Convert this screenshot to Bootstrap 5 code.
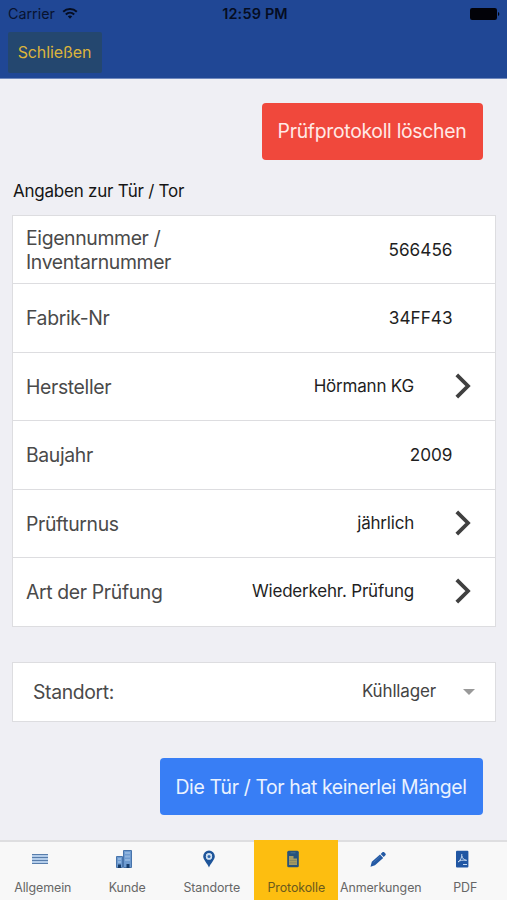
<!DOCTYPE html>
<html lang="de">
<head>
<meta charset="utf-8">
<meta name="viewport" content="width=device-width, initial-scale=1">
<title>Protokolle</title>
<link href="https://cdn.jsdelivr.net/npm/bootstrap@5.3.0/dist/css/bootstrap.min.css" rel="stylesheet">
<style>
  body { font-family: Inter, "Liberation Sans", sans-serif; background: #efeff4; height: 900px; overflow: hidden; }
  svg { display: block; flex: none; }
  .app-header { background: #204795; height: 79px; border-bottom: 1px solid #6f88bd; }
  .status-bar { grid-template-columns: 1fr auto 1fr; height: 28px; font-size: 14.3px; line-height: 28px; color: #081330; }
  .status-time { color: #050d22; font-size: 14.4px; letter-spacing: .2px; padding-left: 3px; }
  .wifi { margin-left: 6px; }
  .battery { padding-right: 7px; }
  .btn-close-view { width: 94px; height: 41px; margin: 4px 0 0 8px; padding: 0 1px 1px 0; background: #24476f; color: #dcb43c; border-radius: 2px; font-size: 16px; letter-spacing: -.1px; line-height: 1; }
  .btn-action { height: 57px; border-radius: 4px; font-size: 19.4px; line-height: 1; padding: 2px 0 0; }
  .btn-delete { width: 221px; background: #f0483c; color: #ffe9e6; margin-top: 23.5px; letter-spacing: -.3px; }
  .btn-ok { width: 323px; background: #387ef5; color: #eaf2ff; margin-top: 36px; letter-spacing: -.37px; }
  .action-row { padding-right: 24.5px; }
  .section-title { font-size: 17px; letter-spacing: -.23px; line-height: 20px; margin: 21.500px 0 14px 13px; color: #151515; }
  .panel { margin: 0 11px 0 12px; border: 1px solid #dddde0; background: #fff; }
  .field-list { height: 411.500px; }
  .field-row { flex: 1 1 0; padding-left: 13px; color: #4a4a4a; }
  .field-row + .field-row { border-top: 1.4px solid #dddde0; }
  .field-name { font-size: 19.4px; letter-spacing: -.36px; line-height: 24.5px; padding-top: 1px; }
  .field-value { font-size: 17px; letter-spacing: -.2px; color: #1f1f1f; }
  .field-number { font-size: 17.2px; letter-spacing: 0; }
  .inset-plain { padding-right: 42.5px; }
  .inset-arrow { padding-right: 24px; }
  .chevron { width: 16px; height: 28px; margin: -1px 0 0 41px; }
  .location { height: 60px; margin-top: 35.500px; padding: 0 19px 0 20px; color: #4a4a4a; }
  .location-value { font-size: 17px; letter-spacing: -.15px; color: #444; margin: 0 26px 0 0; }
  .location-arrow { margin-top: -1px; }
  .tab-bar { height: 60px; border-top: 2px solid #dedee0; background: #f8f8f8; }
  .tab-item { flex: 1 1 0; min-width: 0; font-size: 12.4px; letter-spacing: -.07px; color: #666; line-height: 16px; white-space: nowrap; padding-left: 1px; }
  .tab-item svg { width: 20px; height: 20px; margin: 7px 6px 11px 0; }
  .tab-active { background: #fdbe10; margin-top: -2px; padding-top: 2px; color: #6a591d; }
</style>
</head>
<body class="d-flex flex-column">
<header class="app-header">
  <div class="status-bar d-grid">
    <div class="d-flex align-items-center ps-2">
      <span>Carrier</span>
      <svg class="wifi" width="18" height="14" viewBox="0 0 18 14" fill="none" stroke="#050d22" stroke-width="2"><path d="M2.2 4.700C6 1 12 1 15.8 4.700M4.8 7.500c2.4-2.3 6-2.3 8.4 0"/><path d="M6.8 9.300c1.3-1.2 3.1-1.2 4.4 0L9 11.700z" fill="#050d22" stroke="none"/></svg>
    </div>
    <strong class="status-time fw-semibold">12:59 PM</strong>
    <div class="battery d-flex justify-content-end align-items-center">
      <svg width="30" height="12" viewBox="0 0 30 12" fill="#020208"><rect width="27" height="12" rx="2.2"/><path d="M28 4c1.8.6 1.8 3.400 0 4z"/></svg>
    </div>
  </div>
  <button class="btn btn-close-view border-0">Schließen</button>
</header>

<main class="d-flex flex-column flex-grow-1">
  <div class="action-row d-flex justify-content-end"><button class="btn btn-action btn-delete border-0">Prüfprotokoll löschen</button></div>
  <h1 class="section-title fw-normal">Angaben zur Tür / Tor</h1>
  <section class="panel field-list d-flex flex-column">
    <div class="field-row inset-plain d-flex align-items-center justify-content-between"><span class="field-name">Eigennummer /<br>Inventarnummer</span><span class="field-value field-number">566456</span></div>
    <div class="field-row inset-plain d-flex align-items-center justify-content-between"><span class="field-name">Fabrik-Nr</span><span class="field-value field-number">34FF43</span></div>
    <div class="field-row inset-arrow d-flex align-items-center"><span class="field-name me-auto">Hersteller</span><span class="field-value">Hörmann KG</span><svg class="chevron" viewBox="0 0 16 28" fill="none" stroke="#404040" stroke-width="3.800"><path d="M1.800 2.800 13 14 1.800 25.200"/></svg></div>
    <div class="field-row inset-plain d-flex align-items-center justify-content-between"><span class="field-name">Baujahr</span><span class="field-value field-number">2009</span></div>
    <div class="field-row inset-arrow d-flex align-items-center"><span class="field-name me-auto">Prüfturnus</span><span class="field-value">jährlich</span><svg class="chevron" viewBox="0 0 16 28" fill="none" stroke="#404040" stroke-width="3.800"><path d="M1.800 2.800 13 14 1.800 25.200"/></svg></div>
    <div class="field-row inset-arrow d-flex align-items-center"><span class="field-name me-auto">Art der Prüfung</span><span class="field-value">Wiederkehr. Prüfung</span><svg class="chevron" viewBox="0 0 16 28" fill="none" stroke="#404040" stroke-width="3.800"><path d="M1.800 2.800 13 14 1.800 25.200"/></svg></div>
  </section>
  <section class="panel location d-flex align-items-center">
    <span class="field-name me-auto">Standort:</span><span class="location-value">Kühllager</span>
    <svg class="location-arrow" width="14" height="8" viewBox="0 0 14 8"><path d="M1 1h12L7 7z" fill="#999"/></svg>
  </section>
  <div class="action-row d-flex justify-content-end"><button class="btn btn-action btn-ok border-0">Die Tür / Tor hat keinerlei Mängel</button></div>
</main>

<nav class="tab-bar d-flex">
  <div class="tab-item d-flex flex-column align-items-center">
    <svg viewBox="0 0 20 20"><path fill="#b4cdea" d="M2 5h16v10H2z"/><path d="M2 5.500h16M2 8.500h16M2 11.500h16M2 14.500h16" stroke="#587dab" stroke-width="1.200"/></svg><span>Allgemein</span></div>
  <div class="tab-item d-flex flex-column align-items-center">
    <svg viewBox="0 0 20 20"><path fill="#6e9bd0" stroke="#4874ab" d="M2.500 7.500h6v11h-6zM9.500 1.500h8v17h-8z"/><path fill="#8fb4de" d="M11 3h5v2h-5zM11 6.500h5v2h-5zM11 10h5v2h-5zM4 9h3v2H4zM4 12h3v2H4z"/><path fill="#173d6b" d="M4 15.500h3V19H4zM12.500 15h3v4h-3z"/></svg><span>Kunde</span></div>
  <div class="tab-item d-flex flex-column align-items-center">
    <svg viewBox="0 0 20 20"><path fill="#1e559a" fill-rule="evenodd" d="M10 1.500a5.800 5.800 0 0 0-5.800 5.800C4.200 11 8.500 14.500 10 18.500c1.500-4 5.800-7.500 5.800-11.200A5.800 5.800 0 0 0 10 1.500zm0 2.800a3.100 3.100 0 1 1 0 6.200 3.100 3.100 0 0 1 0-6.200z"/><circle cx="10" cy="7.400" r="3.100" fill="#cddff2"/><circle cx="10" cy="7.400" r="1.500" fill="#2e68ad"/></svg><span>Standorte</span></div>
  <div class="tab-item tab-active d-flex flex-column align-items-center">
    <svg viewBox="0 0 20 20"><rect x="4.200" y="1.700" width="11.600" height="16.600" rx="1.500" fill="#28527b"/><path fill="#a79b60" d="M6 7h4.500v2.500H14V16H6z"/><path d="M7.500 3.800h5" stroke="#4b7390"/><path d="M6.500 11.500h7M6.500 13.800h7" stroke="#7d8064" stroke-width=".7"/></svg><span>Protokolle</span></div>
  <div class="tab-item d-flex flex-column align-items-center">
    <svg viewBox="0 0 20 20"><path fill="#2359a4" d="M2.500 17.800 3.800 12.800l8.200-7.300 3.200 3.400L7 16.200zM12.700 4.900l1.700-1.600c.6-.5 1.300-.5 1.800 0l1.200 1.300c.5.5.5 1.200 0 1.700L15.700 8z"/><path d="m5.500 13.500 7-6.500" stroke="#5583c0" stroke-width=".6"/></svg><span>Anmerkungen</span></div>
  <div class="tab-item d-flex flex-column align-items-center">
    <svg viewBox="0 0 20 20"><rect x="4" y="1.800" width="12.400" height="16.800" rx="1" fill="#2056a3"/><path fill="none" stroke="#c5d8ef" stroke-width="1" d="M9.800 5c.3 3-1 6-3.800 8.200M9.900 7c.5 2.500 2 4 4.800 4.400M6 12.800c2-1.500 5-2 8.500-1.500"/><path d="M11 15.500h4" stroke="#c5d8ef"/></svg><span>PDF</span></div>
</nav>
<script src="https://cdn.jsdelivr.net/npm/bootstrap@5.3.0/dist/js/bootstrap.bundle.min.js"></script>
</body>
</html>
